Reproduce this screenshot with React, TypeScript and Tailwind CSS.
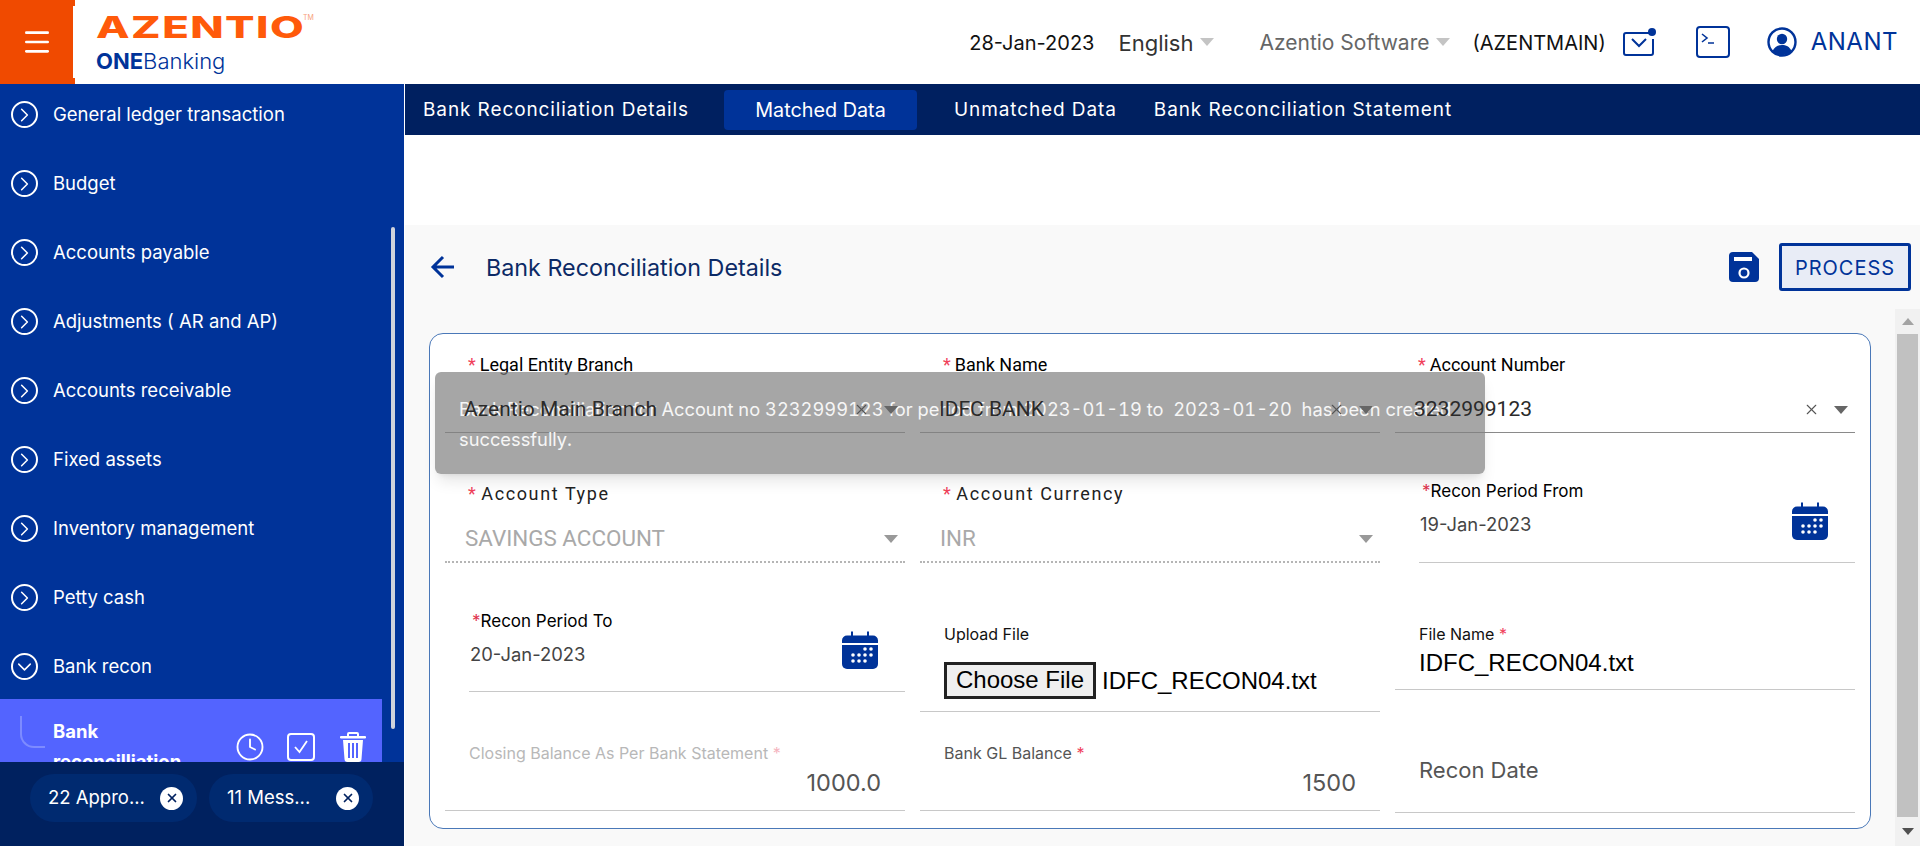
import { ChevronDown, ChevronRight, Clock, Menu, X } from "lucide-react";
import type { ReactNode } from "react";

const menuItems = [
  "General ledger transaction",
  "Budget",
  "Accounts payable",
  "Adjustments ( AR and AP)",
  "Accounts receivable",
  "Fixed assets",
  "Inventory management",
  "Petty cash",
];

function CircleIcon({ down }: { down?: boolean }) {
  return (
    <span className="flex h-[27px] w-[27px] shrink-0 items-center justify-center rounded-full border-2 border-white">
      {down ? (
        <ChevronDown size={24} strokeWidth={1.6} className="text-white" />
      ) : (
        <ChevronRight size={24} strokeWidth={1.6} className="text-white" />
      )}
    </span>
  );
}

function Caret({ className }: { className: string }) {
  return <span className={`h-0 w-0 border-x-[7px] border-t-[8px] border-x-transparent ${className}`} />;
}

function CalendarIcon() {
  return (
    <svg width="38" height="38" viewBox="0 0 38 38" className="shrink-0">
      <path d="M10 0.5h2v4h14v-4h2v4h4a5 5 0 0 1 5 5v2.5H1V9.5a5 5 0 0 1 5-5h4z" fill="#003399" />
      <path d="M1 14h36v19a5 5 0 0 1-5 5H6a5 5 0 0 1-5-5z" fill="#003399" />
      {[
        [24, 18],
        [30, 18],
        [12, 24],
        [18, 24],
        [24, 24],
        [30, 24],
        [12, 30],
        [18, 30],
        [24, 30],
      ].map(([cx, cy]) => (
        <circle key={`${cx}-${cy}`} cx={cx} cy={cy} r="1.8" fill="#fff" />
      ))}
    </svg>
  );
}

function Star({ soft }: { soft?: boolean }) {
  return <span className={soft ? "text-[#f5b5c0]" : "text-[#f0405a]"}>*</span>;
}

function SelectField({ label, value, clear }: { label: string; value: string; clear?: boolean }) {
  return (
    <div className="flex h-[88px] flex-col border-b border-[#8a8a8a] font-['Roboto',sans-serif]">
      <div className="ml-[23px] flex h-[38px] items-center gap-[4px] text-[18px] text-black">
        <Star />
        {label}
      </div>
      {/* the inputs sit above the toast in the original page */}
      <div className="relative z-10 flex items-center pl-[19px] pr-[7px] pt-[11px] text-[21px] text-[#2a2a2a]">
        <span className="flex-1">{value}</span>
        {clear && <X size={17} strokeWidth={1.5} className="mr-[14px] text-[#555]" />}
        <Caret className="border-t-[#666]" />
      </div>
    </div>
  );
}

function DisabledSelect({ label, value }: { label: string; value: string }) {
  return (
    <div className="flex h-[89px] flex-col border-b-2 border-dotted border-[#b5b5b5] font-['Roboto',sans-serif]">
      <div className="ml-[23px] flex h-[38px] items-center gap-[4px] text-[18px] tracking-[1.6px] text-[#222]">
        <Star />
        {label}
      </div>
      <div className="flex items-center pl-[20px] pr-[7px] pt-[10px] text-[22.4px] text-[#a9a9a9]">
        <span className="flex-1">{value}</span>
        <Caret className="border-t-[#999]" />
      </div>
    </div>
  );
}

function DateField({
  label,
  value,
  height,
  topPad,
  iconTop,
}: {
  label: string;
  value: string;
  height: string;
  topPad: string;
  iconTop: string;
}) {
  return (
    <div className={`flex border-b border-[#c8c8c8] font-['Inter',sans-serif] ${height}`}>
      <div className={`flex-1 ${topPad}`}>
        <div className="ml-[3px] text-[17px] leading-[24px] text-black">
          <span className="text-[#e0304a]">*</span>
          {label}
        </div>
        <div className="ml-px mt-[9px] text-[18.4px] leading-[24px] text-[#444]">{value}</div>
      </div>
      <div className={`mr-[26px] ${iconTop}`}>
        <CalendarIcon />
      </div>
    </div>
  );
}

function AmountField({ label, value, soft }: { label: string; value: string; soft?: boolean }) {
  return (
    <div className="flex h-[81px] flex-col border-b border-[#c8c8c8] font-['Inter',sans-serif]">
      <div className={`pl-[24px] pt-[13px] text-[16px] leading-[20px] ${soft ? "text-[#b8b8b8]" : "text-[#555]"}`}>
        {label} <Star soft={soft} />
      </div>
      <div className="mt-[6px] pr-[24px] text-right text-[23.5px] leading-[28px] text-[#555]">{value}</div>
    </div>
  );
}

function Chip({ children }: { children: ReactNode }) {
  return (
    <div className="flex h-[48px] items-center justify-between rounded-full bg-[#002a70] pl-[18px] pr-[14px] text-[18.5px] text-white">
      {children}
      <span className="flex h-[23px] w-[23px] items-center justify-center rounded-full bg-white">
        <X size={14} strokeWidth={3} className="text-[#00215f]" />
      </span>
    </div>
  );
}

export default function App() {
  return (
    <div className="flex h-[846px] w-[1920px] flex-col overflow-hidden bg-white font-['Inter',sans-serif]">
      {/* Header */}
      <header className="flex h-[84px] shrink-0 items-center">
        <div className="relative flex h-[84px] w-[75px] shrink-0 items-center justify-center bg-[#f04a00] pr-[1px]">
          <Menu size={32} strokeWidth={2} className="text-white" />
          <span className="absolute bottom-[6px] right-0 top-[6px] w-[2px] bg-white" />
        </div>

        <div className="ml-[21px] w-[290px]">
          <div className="relative h-[34px]">
            <span className="inline-block origin-left scale-x-[1.455] text-[30px] font-extrabold leading-[34px] tracking-[1px] text-[#ff5a0a]">
              AZENTIO
            </span>
            <span className="absolute left-[207px] top-[3px] text-[7px] leading-[10px] text-[#f7a07a]">TM</span>
          </div>
          <div className="mt-[3px] text-[22px] leading-[28px] text-[#003399]">
            <span className="font-bold">ONE</span>
            <span className="font-light">Banking</span>
          </div>
        </div>

        <div className="ml-auto flex items-center text-[20px]">
          <span className="mt-[2px] text-[#111]">28-Jan-2023</span>
          <span className="ml-[24px] mt-[2px] text-[22px] text-[#333]">English</span>
          <Caret className="ml-[7px] border-t-[#c4c4c4]" />
          <span className="ml-[45px] mt-[2px] text-[21px] text-[#666]">Azentio Software</span>
          <Caret className="ml-[7px] border-t-[#c4c4c4]" />
          <span className="ml-[22px] mt-[2px] text-[#111]">(AZENTMAIN)</span>
          <svg width="34" height="28" viewBox="0 0 34 28" fill="none" className="ml-[17px]">
            <path d="M26 5H3a2 2 0 0 0-2 2v18a2 2 0 0 0 2 2h25a2 2 0 0 0 2-2V11" stroke="#003399" strokeWidth="2" />
            <path d="M9 11l7 7 7-7" stroke="#003399" strokeWidth="2" />
            <circle cx="29" cy="4" r="4" fill="#003399" />
          </svg>
          <svg width="34" height="32" viewBox="0 0 34 32" fill="none" className="ml-[39px]">
            <rect x="1" y="1" width="32" height="30" rx="3" stroke="#003399" strokeWidth="2" />
            <path d="M6 8l5 4-5 4M12 17h6" stroke="#003399" strokeWidth="1.6" />
          </svg>
          <svg width="30" height="30" viewBox="0 0 30 30" className="ml-[37px]">
            <circle cx="15" cy="15" r="13.5" fill="none" stroke="#003399" strokeWidth="2.4" />
            <circle cx="15" cy="12" r="5.2" fill="#003399" />
            <path d="M5.5 24c2-4.5 5.5-6 9.5-6s7.500 1.500 9.500 6a13 13 0 0 1-19 0z" fill="#003399" />
          </svg>
          <span className="ml-[14px] mr-[22px] text-[24px] tracking-[0.5px] text-[#003399]">ANANT</span>
        </div>
      </header>

      <div className="flex min-h-0 flex-1">
        {/* Sidebar */}
        <aside className="relative flex w-[404px] shrink-0 flex-col bg-[#003399]">
          <nav className="-mt-[4px] min-h-0 flex-1 overflow-hidden">
            {menuItems.map((item) => (
              <div key={item} className="flex h-[69px] items-center gap-[15px] pl-[11px] text-[18.5px] text-white">
                <CircleIcon />
                {item}
              </div>
            ))}
            <div className="flex h-[67px] items-center gap-[15px] pl-[11px] pt-[2px] text-[18.5px] text-white">
              <CircleIcon down />
              Bank recon
            </div>
            <div className="flex h-[91px] w-[382px] bg-[#5364ff] text-white">
              <span className="ml-[20px] mt-[17px] h-[32px] w-[25px] shrink-0 rounded-bl-[14px] border-b-2 border-l-2 border-[#7d8bff]" />
              <div className="ml-[8px] mt-[17px] w-[150px] shrink-0 text-[18.5px] font-bold leading-[30px]">Bank reconcilliation</div>
              <div className="ml-[32px] mt-[33px] flex items-start">
                <Clock size={30} strokeWidth={1.5} />
                <svg width="28" height="28" viewBox="0 0 28 28" fill="none" className="ml-[22px] mt-[1px]">
                  <rect x="1" y="1" width="26" height="26" rx="3" stroke="#fff" strokeWidth="2" />
                  <path d="M8 14l4.500 5L20 8" stroke="#fff" strokeWidth="1.800" />
                </svg>
                <svg width="26" height="30" viewBox="0 0 26 30" fill="#fff" className="ml-[25px]">
                  <path d="M9 0h8a2 2 0 0 1 2 2v2h6a1 1 0 0 1 0 2.500H1A1 1 0 0 1 1 4h6V2a2 2 0 0 1 2-2zm0 4h8V2H9z" />
                  <path d="M3 8h20l-1.500 19a3 3 0 0 1-3 3h-11a3 3 0 0 1-3-3zm5 3v15h2V11zm4 0v15h2V11zm4 0v15h2V11z" fillRule="evenodd" />
                </svg>
              </div>
            </div>
          </nav>
          <div className="grid h-[84px] shrink-0 grid-cols-[167px_164px] gap-[12px] bg-[#00215f] pl-[30px] pt-[12px]">
            <Chip>22 Appro...</Chip>
            <Chip>11 Mess...</Chip>
          </div>
          {/* sidebar scrollbar */}
          <span className="absolute left-[391px] top-[143px] h-[502px] w-[4px] rounded-full bg-[#cfd3dc]" />
        </aside>

        {/* Main */}
        <main className="ml-px flex min-w-0 flex-1 flex-col bg-[#f9f9f9]">
          <div className="flex h-[51px] shrink-0 items-center bg-[#002060] pl-[18px] pt-[2px] text-[19px] tracking-[0.9px] text-white">
            <span>Bank Reconciliation Details</span>
            <span className="-mt-[2px] ml-[35px] flex h-[40px] w-[193px] items-center justify-center rounded-[4px] bg-[#003399] pt-[2px] text-[19.8px] tracking-normal">
              Matched Data
            </span>
            <span className="ml-[37px]">Unmatched Data</span>
            <span className="ml-[37px]">Bank Reconciliation Statement</span>
          </div>
          <div className="h-[90px] shrink-0 bg-white" />

          <div className="flex h-[84px] shrink-0 items-center pl-[25px] pr-[9px]">
            <svg width="24" height="24" viewBox="0 0 24 24" fill="none" stroke="#003399" strokeWidth="3">
              <path d="M24 12H3M13 2L3 12l10 10" />
            </svg>
            <h1 className="ml-[32px] mt-[2px] text-[23.3px] font-normal text-[#0c2a66]">Bank Reconciliation Details</h1>
            <svg width="30" height="30" viewBox="0 0 30 30" className="ml-auto">
              <path d="M4 0h19l7 7v19a4 4 0 0 1-4 4H4a4 4 0 0 1-4-4V4a4 4 0 0 1 4-4z" fill="#003399" />
              <rect x="5" y="5" width="18" height="4" fill="#fff" />
              <circle cx="15" cy="21" r="4.500" fill="none" stroke="#fff" strokeWidth="2.200" />
            </svg>
            <button className="ml-[20px] h-[48px] w-[132px] rounded-[3px] border-[3px] border-[#003399] bg-[#e8ecf6] pt-[2px] text-[20px] tracking-[1px] text-[#003399]">
              PROCESS
            </button>
          </div>

          <div className="flex min-h-0 flex-1">
            <div className="flex-1 px-[24px] pt-[24px]">
              <section className="relative h-[496px] rounded-[14px] border border-[#4a78b8] bg-white px-[15px] pt-[11px]">
                <div className="grid grid-cols-3 gap-x-[15px] [grid-template-rows:129px_126px_130px_83px]">
                  <SelectField label="Legal Entity Branch" value="Azentio Main Branch" clear />
                  <SelectField label="Bank Name" value="IDFC BANK" clear />
                  <SelectField label="Account Number" value="3232999123" clear />

                  <DisabledSelect label="Account Type" value="SAVINGS ACCOUNT" />
                  <DisabledSelect label="Account Currency" value="INR" />
                  <div className="ml-[24px]">
                    <DateField label="Recon Period From" value="19-Jan-2023" height="h-[89px]" topPad="pt-[5px]" iconTop="mt-[28px]" />
                  </div>

                  <div className="ml-[24px]">
                    <DateField label="Recon Period To" value="20-Jan-2023" height="h-[92px]" topPad="pt-[9px]" iconTop="mt-[31px]" />
                  </div>
                  <div className="h-[112px] border-b border-[#c8c8c8] pl-[24px] pt-[24px]">
                    <div className="text-[16px] leading-[20px] text-[#111]">Upload File</div>
                    <div className="mt-[18px] flex items-center font-['Liberation_Sans',sans-serif] text-[24px] text-black">
                      <button className="h-[37px] w-[152px] border-[3px] border-[#222] bg-[#efefef] pb-[2px] leading-[28px]">Choose File</button>
                      <span className="ml-[6px]">IDFC_RECON04.txt</span>
                    </div>
                  </div>
                  <div className="h-[90px] border-b border-[#c8c8c8] pl-[24px] pt-[24px]">
                    <div className="text-[16px] leading-[20px] text-[#111]">
                      File Name <Star />
                    </div>
                    <div className="mt-[2px] font-['Liberation_Sans',sans-serif] text-[24px] leading-[34px] text-black">IDFC_RECON04.txt</div>
                  </div>

                  <AmountField label="Closing Balance As Per Bank Statement" value="1000.0" soft />
                  <AmountField label="Bank GL Balance" value="1500" />
                  <div className="h-[83px] border-b border-[#c8c8c8] pl-[24px] pt-[26px] text-[22px] leading-[28px] text-[#555]">
                    Recon Date
                  </div>
                </div>

                {/* Toast */}
                <div className="absolute left-[5px] top-[38px] h-[102px] w-[1050px] rounded-[6px] bg-[#808080]/70 px-[24px] pt-[22px] text-[18.3px] leading-[30px] tabular-nums text-[#f6f6f6] shadow-lg">
                  Bank Reconciliation for Account no 3232999123 for period from 2023-01-19 to&nbsp; 2023-01-20&nbsp; has been created successfully.
                </div>
              </section>
            </div>

            {/* Page scrollbar */}
            <div className="flex w-[25px] shrink-0 flex-col items-center bg-[#f1f1f1] px-[2px]">
              <div className="flex h-[25px] w-full items-center justify-center">
                <span className="h-0 w-0 border-x-[6px] border-b-[7px] border-x-transparent border-b-[#a3a3a3]" />
              </div>
              <div className="h-[483px] w-full bg-[#c1c1c1]" />
              <div className="flex flex-1 items-center justify-center">
                <span className="h-0 w-0 border-x-[6px] border-t-[7px] border-x-transparent border-t-[#505050]" />
              </div>
            </div>
          </div>
        </main>
      </div>
    </div>
  );
}
